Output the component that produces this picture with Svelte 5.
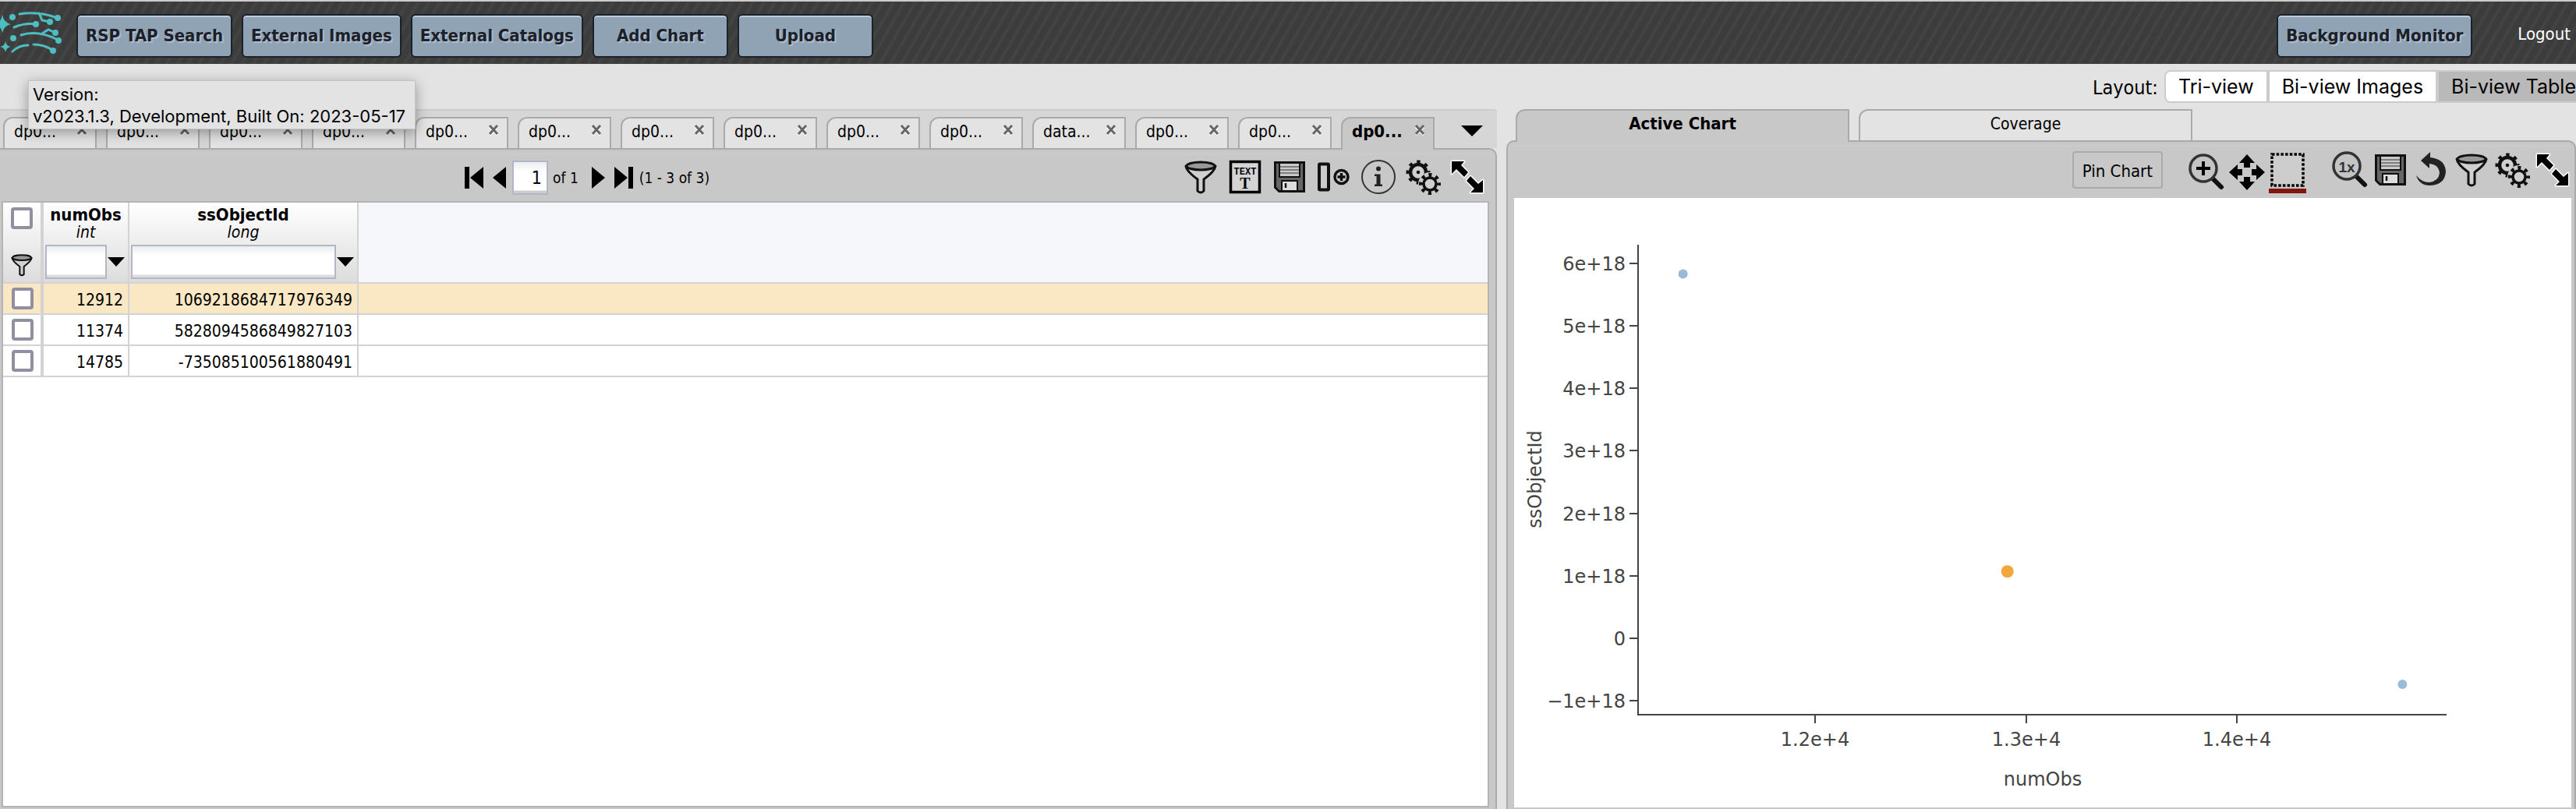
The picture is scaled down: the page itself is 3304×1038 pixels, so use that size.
<script>
  const actions = ['RSP TAP Search', 'External Images', 'External Catalogs', 'Add Chart', 'Upload'];
  const tabs = ['dp0...', 'dp0...', 'dp0...', 'dp0...', 'dp0...', 'dp0...', 'dp0...', 'dp0...', 'dp0...', 'dp0...', 'data...', 'dp0...', 'dp0...', 'dp0...'];
  const activeTab = tabs.length - 1;
  const tableTools = ['filter', 'text', 'save', 'column', 'info', 'gears', 'expand'];
  const chartTools = ['restore', 'save', 'undo', 'filter', 'gears', 'expand'];
  const rows = [
    { numObs: 12912, id: '1069218684717976349', y: 1.069 },
    { numObs: 11374, id: '5828094586849827103', y: 5.828 },
    { numObs: 14785, id: '-735085100561880491', y: -0.735 }
  ];
  const selected = 0;

  const yTicks = [6, 5, 4, 3, 2, 1, 0, -1];
  const xTicks = [1.2, 1.3, 1.4];
  const px = (v) => 386 + (v - 12000) * 0.2705;
  const py = (v) => 565 - v * 80.2;
  const yLabel = (v) => (v === 0 ? '0' : `${v < 0 ? '−' : ''}${Math.abs(v)}e+18`);
</script>

{#snippet icon(name)}
  <svg class="icon" viewBox="0 0 48 48" aria-hidden="true">
    {#if name === 'filter'}
      <path d="M5 10 Q6 17 20 27 L20 42 Q24 46 28 42 L28 27 Q42 17 43 10Z" fill="#d0d0d0" stroke="#111" stroke-width="3" stroke-linejoin="round" />
      <ellipse cx="24" cy="10" rx="18" ry="5" fill="#999" stroke="#111" stroke-width="3" />
    {:else if name === 'text'}
      <rect x="5.500" y="4.500" width="37" height="39" fill="#d4d4d4" stroke="#000" stroke-width="3.500" />
      <text x="24" y="21" text-anchor="middle" class="tiny">TEXT</text>
      <text x="24" y="39" text-anchor="middle" class="serif-t">T</text>
    {:else if name === 'save'}
      <path d="M4 4H44V44H10L4 38Z" fill="#111" />
      <path d="M7 7H41V41H11L7 37Z" fill="#666" />
      <path d="M10 5H38V25H10Z" fill="#111" />
      <path d="M12 7H36V23H12Z" fill="#c9c9c9" />
      <path d="M12 11H36M12 15H36M12 19H36" stroke="#666" stroke-width="1.500" />
      <path d="M14 29H34V42H14Z" fill="#ddd" stroke="#111" stroke-width="2" />
      <path d="M19 32V38" stroke="#111" stroke-width="2.500" />
    {:else if name === 'column'}
      <rect x="5" y="7.500" width="12" height="33" rx="1" fill="#ccc" stroke="#111" stroke-width="4" />
      <circle cx="33.500" cy="24" r="8.500" fill="#ccc" stroke="#111" stroke-width="3.500" />
      <path d="M33.500 19V29M28.500 24H38.500" stroke="#111" stroke-width="3.500" />
    {:else if name === 'info'}
      <circle cx="24" cy="24" r="21" fill="none" stroke="#333" stroke-width="2" />
      <circle cx="24" cy="13.500" r="3" fill="#222" />
      <path d="M19 20.500H26.500V33.500H29V36H19V33.500H21.500V23H19Z" fill="#222" />
    {:else if name === 'gears'}
      <circle cx="18" cy="18" r="10" fill="#d0d0d0" stroke="#111" stroke-width="4.500" />
      <circle cx="18" cy="18" r="13.500" fill="none" stroke="#111" stroke-width="4" stroke-dasharray="4.480 6.120" stroke-dashoffset="2.240" />
      <circle cx="18" cy="18" r="2.300" fill="#111" />
      <circle cx="33" cy="33" r="15" fill="#c8c8c8" />
      <circle cx="33" cy="33" r="8" fill="#d0d0d0" stroke="#111" stroke-width="3.500" />
      <circle cx="33" cy="33" r="11.500" fill="none" stroke="#111" stroke-width="5" stroke-dasharray="4 5.030" stroke-dashoffset="2" />
    {:else if name === 'expand'}
      <g fill="#000" stroke="#fff" stroke-width="3" paint-order="stroke" stroke-linejoin="round">
        <path d="M4 4H20L16 9L25 18L20 24L10 14L4 20Z" />
        <path d="M44 44H28L33 39L23 29L28 23L38 33L44 28Z" />
      </g>
    {:else if name === 'zoom' || name === 'restore'}
      <path d="M32 32L43 43" stroke="#111" stroke-width="6" stroke-linecap="round" />
      <circle cx="20" cy="19" r="17" fill="#c4c4c4" stroke="#333" stroke-width="3.500" />
      {#if name === 'zoom'}
        <path d="M20 10V28M11 19H29" stroke="#000" stroke-width="4" />
      {:else}
        <text x="20" y="27" text-anchor="middle" class="one-x">1x</text>
      {/if}
    {:else if name === 'move'}
      <path d="M24 1L34 12H28V18H20V12H14ZM24 47L34 36H28V30H20V36H14ZM1 24L12 14V20H18V28H12V34ZM47 24L36 14V20H30V28H36V34Z" fill="#000" />
    {:else if name === 'select'}
      <rect x="4" y="4" width="40" height="40" fill="#cdcdcd" stroke="#000" stroke-width="3.500" stroke-dasharray="3.500 2.200" />
    {:else if name === 'undo'}
      <path d="M23 1L11 12L22 22V16Q34 17 35 28Q34 38 22 40Q12 40 5 31Q9 44 23 44Q42 43 43 26Q42 10 23 8Z" fill="#222" />
    {/if}
  </svg>
{/snippet}

{#snippet pageArrow(kind)}
  <svg viewBox="0 0 28 28" aria-hidden="true">
    {#if kind === 'first'}<path d="M2 0H8V28H2ZM26 0V28L9 14Z" />
    {:else if kind === 'prev'}<path d="M23 0V28L6 14Z" />
    {:else if kind === 'next'}<path d="M5 0V28L22 14Z" />
    {:else}<path d="M2 0V28L19 14ZM20 0H26V28H20Z" />{/if}
  </svg>
{/snippet}

<div class="app">
  <header class="banner">
    <svg class="logo" viewBox="0 0 80 58" aria-label="Rubin Observatory" role="img">
      <g fill="none" stroke="#4dbdc1" stroke-width="3" stroke-linecap="round">
        <path d="M25 4Q50 0 73 9M50 3L54 12L64 14" />
        <path d="M18 21Q32 15 46 17" />
        <path d="M27 31Q48 24 74 37M54 29L62 24L71 28" />
        <path d="M16 52Q24 44 36 44M43 43Q56 43 67 50" />
      </g>
      <g fill="#4dbdc1">
        <circle cx="74" cy="9" r="4" /><circle cx="64" cy="14" r="4" /><circle cx="46" cy="17" r="4" />
        <circle cx="71" cy="28" r="4" /><circle cx="75" cy="38" r="4" /><circle cx="68" cy="51" r="4" />
        <circle cx="16" cy="8" r="4" /><circle cx="17" cy="35" r="4" />
        <path d="M3 5Q5 15 14 17Q5 19 3 28Q1 19 -6 17Q1 15 3 5ZM7 39Q8 45 14 46Q8 47 7 53Q6 47 0 46Q6 45 7 39Z" />
      </g>
    </svg>
    <nav class="actions">
      {#each actions as label}<button class="cmd">{label}</button>{/each}
    </nav>
    <button class="cmd monitor">Background Monitor</button>
    <a class="logout" href="#logout">Logout</a>
  </header>

  <div class="tooltip" role="tooltip">Version:<br />v2023.1.3, Development, Built On: 2023-05-17</div>

  <div class="layout-bar">
    <span>Layout:</span>
    <div class="views">
      <button>Tri-view</button>
      <button>Bi-view Images</button>
      <button class="on">Bi-view Table</button>
    </div>
  </div>

  <main>
    <section class="side tables">
      <div class="tabs" role="tablist">
        {#each tabs as label, i}
          <div class="tab" class:active={i === activeTab}>
            <button class="name" role="tab" aria-selected={i === activeTab}>{label}</button>
            <button class="close" aria-label="Close tab">
              <svg viewBox="0 0 14 14"><path d="M2 3L12 13M12 3L2 13" stroke="#fff" stroke-width="3" /><path d="M2 1L12 12M12 1L2 12" stroke="#666" stroke-width="3" /></svg>
            </button>
          </div>
        {/each}
        <button class="more" aria-label="More tabs"><svg viewBox="0 0 28 14"><path d="M0 0H28L14 14Z" /></svg></button>
      </div>
      <div class="panel">
        <div class="toolbar">
          <div class="pager">
            <button aria-label="First page">{@render pageArrow('first')}</button>
            <button aria-label="Previous page">{@render pageArrow('prev')}</button>
            <input aria-label="Page" value="1" />
            <span class="of">of 1</span>
            <button aria-label="Next page">{@render pageArrow('next')}</button>
            <button aria-label="Last page">{@render pageArrow('last')}</button>
            <span class="range">(1 - 3 of 3)</span>
          </div>
          <div class="tools">
            {#each tableTools as tool}<button aria-label={tool}>{@render icon(tool)}</button>{/each}
          </div>
        </div>
        <div class="table-box">
          <table>
            <colgroup><col class="c-check" /><col class="c-num" /><col class="c-id" /><col /></colgroup>
            <thead>
              <tr>
                <th class="check">
                  <div class="check-head"><input type="checkbox" aria-label="Select all rows" /><button aria-label="Filter selected">{@render icon('filter')}</button></div>
                </th>
                {#each [['numObs', 'int'], ['ssObjectId', 'long']] as [name, type]}
                  <th>
                    <div class="col-name">{name}</div>
                    <div class="col-type">{type}</div>
                    <div class="col-filter">
                      <input aria-label={`${name} filter`} />
                      <button aria-label={`${name} operators`}><svg viewBox="0 0 22 12"><path d="M0 0H22L11 12Z" /></svg></button>
                    </div>
                  </th>
                {/each}
                <th class="rest"></th>
              </tr>
            </thead>
            <tbody>
              {#each rows as row, i}
                <tr class:selected={i === selected}>
                  <td class="check"><input type="checkbox" aria-label={`Select row ${i + 1}`} /></td>
                  <td>{row.numObs}</td>
                  <td>{row.id}</td>
                  <td class="rest"></td>
                </tr>
              {/each}
            </tbody>
          </table>
        </div>
      </div>
    </section>

    <section class="side charts">
      <div class="tabs" role="tablist">
        <div class="tab active"><button class="name" role="tab" aria-selected="true">Active Chart</button></div>
        <div class="tab"><button class="name" role="tab" aria-selected="false">Coverage</button></div>
      </div>
      <div class="panel">
        <div class="toolbar">
          <button class="pin">Pin Chart</button>
          <div class="tools modes">
            <button aria-label="zoom">{@render icon('zoom')}</button>
            <button aria-label="pan">{@render icon('move')}</button>
            <button aria-label="select" class="current">{@render icon('select')}</button>
          </div>
          <div class="tools">
            {#each chartTools as tool}<button aria-label={tool}>{@render icon(tool)}</button>{/each}
          </div>
        </div>
        <div class="plot">
          <svg viewBox="0 0 1356 782" role="img" aria-label="ssObjectId against numObs">
            <path d="M159 60V663H1196" fill="none" stroke="#444" stroke-width="2" />
            {#each yTicks as v}
              <path d="M148 {Math.round(py(v))}H159" stroke="#444" stroke-width="2" />
              <text x="143" y={Math.round(py(v)) + 9} text-anchor="end">{yLabel(v)}</text>
            {/each}
            {#each xTicks as v}
              <path d="M{Math.round(px(v * 10000))} 663V674" stroke="#444" stroke-width="2" />
              <text x={Math.round(px(v * 10000))} y="703" text-anchor="middle">{v}e+4</text>
            {/each}
            <text x="678" y="754" text-anchor="middle">numObs</text>
            <text x="35" y="361" text-anchor="middle" transform="rotate(-90 35 361)">ssObjectId</text>
            {#each rows as row, i}
              <circle cx={px(row.numObs)} cy={py(row.y)} r={i === selected ? 8 : 6} fill={i === selected ? '#f2a73b' : '#99bad9'} />
            {/each}
          </svg>
        </div>
      </div>
    </section>
  </main>
</div>

<style>
  :global(body) { overflow: hidden; }
  * { box-sizing: border-box; }
  .app {
    position: relative;
    display: flex;
    flex-direction: column;
    min-height: 100vh;
    overflow: hidden;
    background: #e3e3e3;
    color: #000;
    font-family: "DejaVu Sans Condensed", "DejaVu Sans", sans-serif;
    font-size: 21px;
    line-height: 26px;
  }
  button, input { margin: 0; padding: 0; border: 0; background: none; font: inherit; color: inherit; border-radius: 0; }
  button { display: block; white-space: nowrap; }
  svg { display: block; }

  .banner {
    display: flex;
    align-items: center;
    height: 82px;
    padding: 8px 7px 0 0;
    border-top: 2px solid #ccc;
    background: repeating-linear-gradient(120deg, #3c3c3c 0 6px, #434343 8px 10px, #3c3c3c 12px);
    font-size: 22px;
  }
  .logo { width: 80px; height: 58px; margin: 0 18px 6px 0; }
  .actions { display: flex; gap: 12px; flex: 1; }
  .cmd {
    min-width: 174px;
    height: 56px;
    padding: 0 10px;
    border: 2px solid #1b2129;
    border-radius: 6px;
    background: #8fa3b5;
    box-shadow: inset 0 2px 0 #bccbdd;
    color: #1b2129;
    font-weight: bold;
    text-shadow: 2px 2px 1px #b4bccb;
  }
  .monitor { margin: 0 58px 0 0; }
  .logout { padding-bottom: 4px; color: #fff; text-decoration: none; }

  .tooltip {
    position: absolute;
    z-index: 3;
    left: 36px;
    top: 103px;
    height: 63px;
    padding: 3px 12px 3px 5px;
    border: 1px solid #c4c4c4;
    background: #e3e3e3;
    box-shadow: 0 4px 16px rgba(0, 0, 0, 0.35);
    font-family: Inter, sans-serif;
    font-size: 22px;
    line-height: 28px;
    white-space: nowrap;
  }

  .layout-bar {
    display: flex;
    justify-content: flex-end;
    gap: 8px;
    height: 58px;
    padding-top: 8px;
    font-size: 25px;
    line-height: 46px;
  }
  .views {
    display: flex;
    height: 42px;
    border: 2px solid #ccc;
    border-right: 0;
    border-radius: 8px 0 0 8px;
    overflow: hidden;
    font-family: Inter, sans-serif;
    font-size: 25px;
    line-height: 38px;
  }
  .views button { padding: 0 16px; background: #fff; }
  .views button + button { border-left: 4px solid #ccc; }
  .views .on { padding-right: 0; background: #b9b9b9; }

  main { flex: 1; display: grid; grid-template-columns: 1920fr 1372fr; gap: 12px; }
  .side { display: flex; flex-direction: column; min-width: 0; }
  .tabs { display: flex; gap: 12px; position: relative; z-index: 1; }
  .tab {
    display: flex;
    align-items: flex-start;
    justify-content: space-between;
    height: 40px;
    border: 2px solid #aaa;
    border-bottom: 0;
    border-radius: 12px 0 0 0;
    background: #e3e3e3;
  }
  .tab.active { height: 42px; margin-bottom: -2px; background: #c8c8c8; font-size: 22px; font-weight: bold; }
  .tables .tabs { height: 50px; padding: 8px 18px 0 4px; border-top: 2px solid #ccc; border-radius: 0 4px 0 0; background: #d6d6d6; }
  .tables .tab { width: 120px; padding: 4px 10px 0 12px; }
  .close { padding-top: 4px; }
  .close svg { width: 14px; height: 14px; }
  .more { margin-left: auto; align-self: flex-start; padding-top: 11px; }
  .more svg { width: 28px; height: 14px; }
  .charts .tabs { height: 40px; padding-left: 12px; }
  .charts .tab { width: 428px; justify-content: center; padding-top: 4px; }

  .panel {
    flex: 1;
    display: flex;
    flex-direction: column;
    border: 2px solid #aaa;
    border-bottom: 0;
    background: #c8c8c8;
    box-shadow: inset 0 4px 0 #c8c8c8, inset 0 6px 0 #cbcbcb;
  }
  .tables .panel { border-left: 0; border-radius: 0 10px 0 0; padding: 0 8px 2px 2px; }
  .charts .panel { border-radius: 10px 10px 0 0; padding: 0 4px 2px 8px; }
  .toolbar { display: flex; align-items: center; }
  .tools { display: flex; }
  .icon { width: 48px; height: 48px; }
  .tables .toolbar { height: 66px; padding-left: 590px; justify-content: space-between; }
  .tables .tools { gap: 9px; padding: 4px 4px 0 0; }

  .pager { display: flex; align-items: center; font-size: 19px; padding-top: 6px; }
  .pager svg { width: 28px; height: 28px; }
  .pager button { padding: 0 2px; }
  .pager input {
    width: 46px;
    height: 44px;
    margin: 0 6px 0 1px;
    padding-right: 6px;
    border: 2px solid #b5b5c8;
    background: linear-gradient(#eaeeee, #fff 12px 36px, #ccc 37px);
    font-size: 23px;
    text-align: right;
  }
  .of { padding-right: 10px; }
  .range { padding-left: 4px; }

  .table-box { flex: 1; border: 2px solid #b4b4b4; background: #fff; }
  table { width: 100%; table-layout: fixed; border-collapse: separate; border-spacing: 0; }
  .c-check { width: 52px; }
  .c-num { width: 110px; }
  .c-id { width: 294px; }
  th, td { padding: 0; border-right: 2px solid #d3d3d3; border-bottom: 2px solid #d3d3d3; }
  th { height: 104px; padding-top: 3px; background: linear-gradient(#fff, #dcdcdc); vertical-align: top; }
  th.rest { background: #f5f7fa; }
  th.rest, td.rest { border-right: 0; }
  .check { border-right-width: 4px; }
  td { height: 40px; padding: 4px 6px 0 0; text-align: right; }
  td.check { padding: 0 0 0 11px; }
  .selected td { background: #fae7c4; }
  .check-head { display: flex; flex-direction: column; gap: 30px; padding: 3px 0 0 10px; }
  .check-head .icon { width: 32px; height: 32px; }
  .check-head button { padding-left: 0; margin-left: -2px; }
  input[type='checkbox'] { display: block; appearance: none; width: 28px; height: 28px; border: 4px solid #9090a0; border-radius: 4px; background: #fff; }
  .col-name, .col-type { line-height: 22px; }
  .col-name { padding-top: 2px; font-size: 22px; }
  .col-type { font-weight: normal; font-style: italic; font-size: 21px; }
  .col-filter { display: flex; align-items: center; gap: 1px; padding: 5px 4px 0 2px; }
  .col-filter input { flex: 1; min-width: 0; height: 44px; border: 2px solid #b5b5c8; background: linear-gradient(#eaeeee, #fff 12px 36px, #ddd 37px); }
  .col-filter svg { width: 22px; height: 12px; }

  .charts .toolbar { height: 72px; justify-content: flex-end; }
  .pin { height: 48px; margin-right: 32px; padding: 4px 11px 0; border: 2px solid #aaa; border-radius: 4px; font-size: 22px; }
  .charts .tools { gap: 4px; }
  .charts .modes { margin-right: 32px; }
  .modes button { height: 54px; margin-top: 6px; }
  .current { border-bottom: 6px solid #82160f; }
  .plot { flex: 1; background: #fff; }
  .plot svg { width: 100%; }
  .plot text { fill: #444; font-family: "DejaVu Sans", sans-serif; font-size: 24px; }
  .tiny { font: bold 12px "Liberation Mono", monospace; }
  .serif-t { font: bold 20px "Liberation Serif", serif; }
  .one-x { font: bold 19px "Liberation Sans", sans-serif; fill: #333; }
</style>
